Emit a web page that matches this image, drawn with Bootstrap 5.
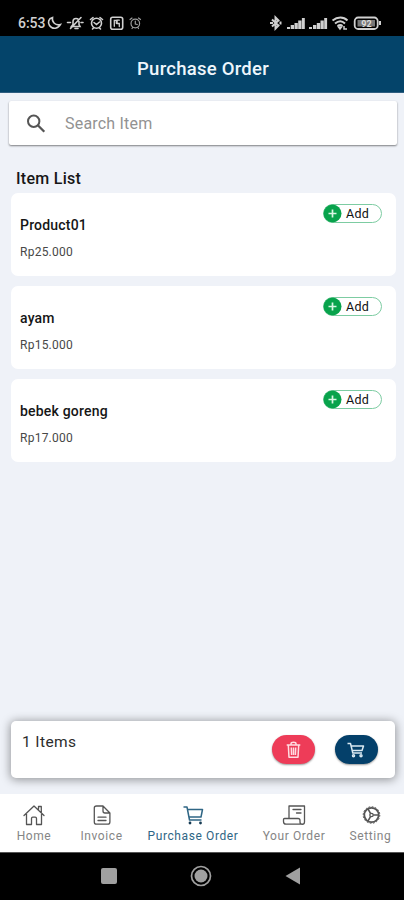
<!DOCTYPE html>
<html lang="en">
<head>
<meta charset="utf-8">
<meta name="viewport" content="width=device-width, initial-scale=1">
<title>Purchase Order</title>
<link href="https://cdn.jsdelivr.net/npm/bootstrap@5.3.0/dist/css/bootstrap.min.css" rel="stylesheet">
<style>
body{font-family:Roboto,"Liberation Sans",sans-serif;background:#eff2f8;color:#161616;height:900px;overflow:hidden}
svg{display:block;flex:none}
.status{height:36px;background:#000;color:#d0d0d0;padding:10px 20px 0 18px}
.clock{font-size:14px;line-height:27px;width:29px;font-weight:500;letter-spacing:-.05px}
.title-bar{height:57px;background:#04446a;color:#eef6fc;font-size:18.5px;line-height:27px;font-weight:500;letter-spacing:.25px;padding-top:20px;padding-left:2px;border-bottom:1px solid #2f5e80}
.search{margin:8px 7px 0 9px;height:44px;border-radius:2px;box-shadow:0 1px 2px rgba(0,0,0,.48);padding-left:16px}
.search input,.search input:focus{font-size:16px;letter-spacing:.2px;padding:2px 0 0;margin-left:19px;background:none}
.search input::placeholder{color:#929292;opacity:1}
.list-title{font-size:16px;line-height:20px;font-weight:500;margin:24px 0 4px 16px;letter-spacing:.28px}
.products{margin:0 8px 0 11px;gap:10px}
.product{height:83px;border-radius:7px;padding:22px 14px 0 9px}
.product-name{font-size:14px;line-height:20px;font-weight:500;letter-spacing:.2px}
.price{font-size:12px;line-height:16px;margin-top:9px;color:#484848;letter-spacing:.25px}
.add{width:59px;height:19px;border:1px solid #7dcca2;font-size:12.5px;letter-spacing:.3px;margin-top:-11px;line-height:17px;color:#111}
.add svg{margin:-1px 4px -1px -1px}
.cart-bar{height:57px;margin:0 9px 16px 11px;border-radius:5px;box-shadow:0 1px 10px 1px rgba(0,0,0,.38);padding:0 17.5px 0 11px}
.count{font-size:15.5px;line-height:20px;margin-top:11px;letter-spacing:.4px;color:#2c2c2c}
.act{width:43px;height:29px;margin-top:14px;box-shadow:0 1px 2px rgba(0,0,0,.4)}
.act-del,.act-del:hover{background:#ee3c58}
.act-cart,.act-cart:hover{background:#04406a;margin-left:19.5px}
.tabs{height:58px;color:#858585;font-size:12px;line-height:16px;padding-top:9px;letter-spacing:.6px}
.tabs svg{color:#555}
.tabs a{color:inherit;gap:1px;white-space:nowrap}
.tabs a.on,.tabs a.on svg{color:#2f6685}
.w-home{width:68px}.w-inv{width:67px}.w-po{width:116px}.w-your{width:86px}.w-set{width:67px}
.sysnav{height:48px;background:#000;padding:0 103px 1px 101px;border-top:1px solid #555}
</style>
<script src="https://cdn.jsdelivr.net/npm/bootstrap@5.3.0/dist/js/bootstrap.bundle.min.js"></script>
</head>
<body class="d-flex flex-column">
<div class="status d-flex align-items-start">
  <span class="clock">6:53</span>
  <svg width="98" height="26" viewBox="0 0 98 26" fill="none" stroke="currentColor" stroke-width="1.600" stroke-linecap="round">
    <path d="M5.500 7.500c-4 1-5 5-3 8c3 4.500 9 3 11-1c-5 1.500-9-2.500-8-7z"/>
    <path d="M24.500 16.500h8.500l-1-2v-3c0-2-1-3-3-3s-3 1-3 3v3zM28 18.500h3M23.500 18.500 34 7.500M20.500 12.500h3M34 12.500h2"/>
    <circle cx="49.500" cy="13.200" r="5"/><path d="m43.500 9.500 2.500-2M55.500 9.500l-2.500-2M47 12.500l2.500 2 3-2.500M45.500 19l1-1M53.500 19l-1-1"/>
    <rect x="63.700" y="7.200" width="12" height="12" rx="2"/><path d="M67.300 16.300v-6h2v3M72.300 10.200h-2.200v3.300h2.200v3" stroke-width="1.300"/>
    <g stroke-width="1.200" opacity=".75"><circle cx="88.300" cy="13.500" r="4.300"/><path d="M83 9.500l2-1.500M93.500 9.500l-2-1.500M88.300 11v3l2 .5M85 18.500l.7-1M91.500 18.500l-.7-1"/></g>
  </svg>
  <svg class="ms-auto" width="116" height="26" viewBox="0 0 116 26" fill="none" stroke="currentColor" stroke-width="1.500">
    <path d="M4 9.500 10.500 15.500 7.500 18.500V7.500L10.500 10.500 4 16.500" stroke-width="2"/><path d="M12.500 11.500v3M2 13h3" stroke-width="2"/>
    <g fill="currentColor" stroke="none"><path d="M19 17h3v2h-3zM22.700 15h3.300v4h-3.300zM26.500 13h3.300v6h-3.300zM30.200 10.500h3.300V19h-3.300zM33.900 8h2.900v11h-2.900zM41 17h3v2h-3zM45 15h3.300v4h-3.300zM48.800 13h3.300v6h-3.300zM52.500 10.500h3.300V19h-3.300zM56.200 8h2.900v11h-2.900z"/></g>
    <path d="M64.500 10.500c5-4 11-4 15 0M67 13.500c3.500-3 7-3 10 0M69.500 16c2-1.500 3.500-1.500 5 0" stroke-width="1.900"/><path d="m70.500 17 1.500 2 1.500-2zM76 16v3h3" />
    <rect x="86.700" y="7.500" width="23" height="11.500" rx="3.500" stroke-width="1.800"/><path d="M111 11h2v4h-2z" fill="currentColor" stroke="none"/>
    <rect x="89.500" y="10" width="17.500" height="6.500" fill="#777" stroke="none"/>
    <text x="98.500" y="16.500" text-anchor="middle" font-size="9" font-weight="700" fill="#ddd" stroke="none">92</text>
  </svg>
</div>
<header class="title-bar d-flex align-items-start justify-content-center"><span>Purchase Order</span></header>

<div class="search bg-white d-flex align-items-center">
  <svg width="21" height="21" viewBox="0 0 21 21" fill="none" stroke="#555" stroke-width="2"><circle cx="8.700" cy="8.200" r="5.700"/><path d="m12.800 12.300 6.500 6.500" stroke-width="2.300"/></svg>
  <input class="form-control border-0 shadow-none" placeholder="Search Item" aria-label="Search Item">
</div>

<h1 class="list-title">Item List</h1>
<main class="products d-flex flex-column">
  <div class="product bg-white d-flex justify-content-between">
    <div><div class="product-name">Product01</div><div class="price">Rp25.000</div></div>
    <div class="add rounded-pill d-flex"><svg width="19" height="19" viewBox="0 0 19 19"><circle cx="9.500" cy="9.500" r="9" fill="#08a34c"/><path d="M9.500 5.500v8M5.500 9.500h8" stroke="#d9f7e4" stroke-width="1.700"/></svg>Add</div>
  </div>
  <div class="product bg-white d-flex justify-content-between">
    <div><div class="product-name">ayam</div><div class="price">Rp15.000</div></div>
    <div class="add rounded-pill d-flex"><svg width="19" height="19" viewBox="0 0 19 19"><circle cx="9.500" cy="9.500" r="9" fill="#08a34c"/><path d="M9.500 5.500v8M5.500 9.500h8" stroke="#d9f7e4" stroke-width="1.700"/></svg>Add</div>
  </div>
  <div class="product bg-white d-flex justify-content-between">
    <div><div class="product-name">bebek goreng</div><div class="price">Rp17.000</div></div>
    <div class="add rounded-pill d-flex"><svg width="19" height="19" viewBox="0 0 19 19"><circle cx="9.500" cy="9.500" r="9" fill="#08a34c"/><path d="M9.500 5.500v8M5.500 9.500h8" stroke="#d9f7e4" stroke-width="1.700"/></svg>Add</div>
  </div>
</main>

<section class="cart-bar bg-white d-flex align-items-start mt-auto">
  <div class="count me-auto">1 Items</div>
  <button class="act act-del btn rounded-pill border-0 p-0 d-flex align-items-center justify-content-center" aria-label="Delete">
    <svg width="16" height="18" viewBox="0 0 16 18" fill="none" stroke="#ffdce1" stroke-width="1.500" stroke-linejoin="round"><path d="M.7 4h13.600M5 4V2.800c0-2 5-2 5 0V4M2.300 4l.7 12.300h9L12.700 4M5.300 6.500l.3 7.500M7.500 6.500V14M9.700 6.500 9.400 14"/></svg>
  </button>
  <button class="act act-cart btn rounded-pill border-0 p-0 d-flex align-items-center justify-content-center" aria-label="Cart">
    <svg width="18" height="16" viewBox="0 0 18 16" fill="none" stroke="#dceaf3" stroke-width="1.500" stroke-linejoin="round"><path d="M.5 1.500h3L5.800 11H15M4.200 4h12.300L15 8.500H5.200"/><circle cx="6.500" cy="13.700" r="1"/><circle cx="14" cy="13.700" r="1"/></svg>
  </button>
</section>

<nav class="tabs bg-white d-flex">
  <a href="#" class="w-home d-flex flex-column align-items-center text-decoration-none">
    <svg width="24" height="24" viewBox="0 0 24 24" fill="none" stroke="currentColor" stroke-width="1.300" stroke-linejoin="round" stroke-linecap="round"><path d="M2 12.500 12 3l10 9.500M4.500 11v10.500h5V15.500c0-1 .5-1.300 1.300-1.300h2.400c.8 0 1.300.3 1.300 1.300v6h5V11M16.500 6.500V3.500h2.800v6"/></svg>Home</a>
  <a href="#" class="w-inv d-flex flex-column align-items-center text-decoration-none">
    <svg width="24" height="24" viewBox="0 0 24 24" fill="none" stroke="currentColor" stroke-width="1.300" stroke-linejoin="round" stroke-linecap="round"><path d="M13 3H6.500C5 3 4.300 3.700 4.300 5v14c0 1.500.7 2.200 2.200 2.200h11.200c1.500 0 2.200-.7 2.200-2.200v-9zM13 3v5c0 1.500.5 2 2 2h4.900M8 14.200h8M8 17.500h8"/></svg>Invoice</a>
  <a href="#" class="w-po on d-flex flex-column align-items-center text-decoration-none">
    <svg width="24" height="24" viewBox="0 0 24 24" fill="none" stroke="currentColor" stroke-width="1.500" stroke-linejoin="round"><path d="M2.500 4H6l2.500 13h12M6.500 6.500H21.500l-1.500 7.500H8" /><circle cx="9" cy="20" r="1.400" fill="#163b53" stroke="none"/><circle cx="19.500" cy="20" r="1.400" fill="#163b53" stroke="none"/></svg>Purchase Order</a>
  <a href="#" class="w-your d-flex flex-column align-items-center text-decoration-none">
    <svg width="24" height="24" viewBox="0 0 24 24" fill="none" stroke="currentColor" stroke-width="1.300" stroke-linejoin="round" stroke-linecap="round"><path d="M7 15.500V3h15.500v16c0 3-4.500 3-4.500 0v-1.500c0-1.500-.5-2-2-2H2.500c-.8 0-1 .3-1 1v2c0 2 .8 2.700 2.500 2.700h16M11 6.500h8M14.500 10H19"/></svg>Your Order</a>
  <a href="#" class="w-set d-flex flex-column align-items-center text-decoration-none">
    <svg width="24" height="24" viewBox="0 0 24 24" fill="none" stroke="currentColor"><circle cx="12.500" cy="12" r="7.200" stroke-width="1.800"/><circle cx="12.500" cy="12" r="8.300" stroke-width="1" stroke-dasharray="1.700 1.560"/><circle cx="12.500" cy="12" r="1.700" stroke-width="1.300"/><path d="M14.200 12H20M11.500 10.300 8.800 5.600M11.500 13.700l-2.700 4.700" stroke-width="1.600"/></svg>Setting</a>
</nav>
<div class="sysnav d-flex align-items-center justify-content-between">
  <svg width="16" height="16" viewBox="0 0 16 16"><rect width="16" height="16" rx="2" fill="#a0a0a0"/></svg>
  <svg width="22" height="22" viewBox="0 0 22 22"><circle cx="11" cy="11" r="9.500" fill="none" stroke="#a0a0a0" stroke-width="1.700"/><circle cx="11" cy="11" r="6.500" fill="#a0a0a0"/></svg>
  <svg width="16" height="18" viewBox="0 0 16 18"><path d="M.5 9 15 .5v17z" fill="#a0a0a0"/></svg>
</div>
</body>
</html>
